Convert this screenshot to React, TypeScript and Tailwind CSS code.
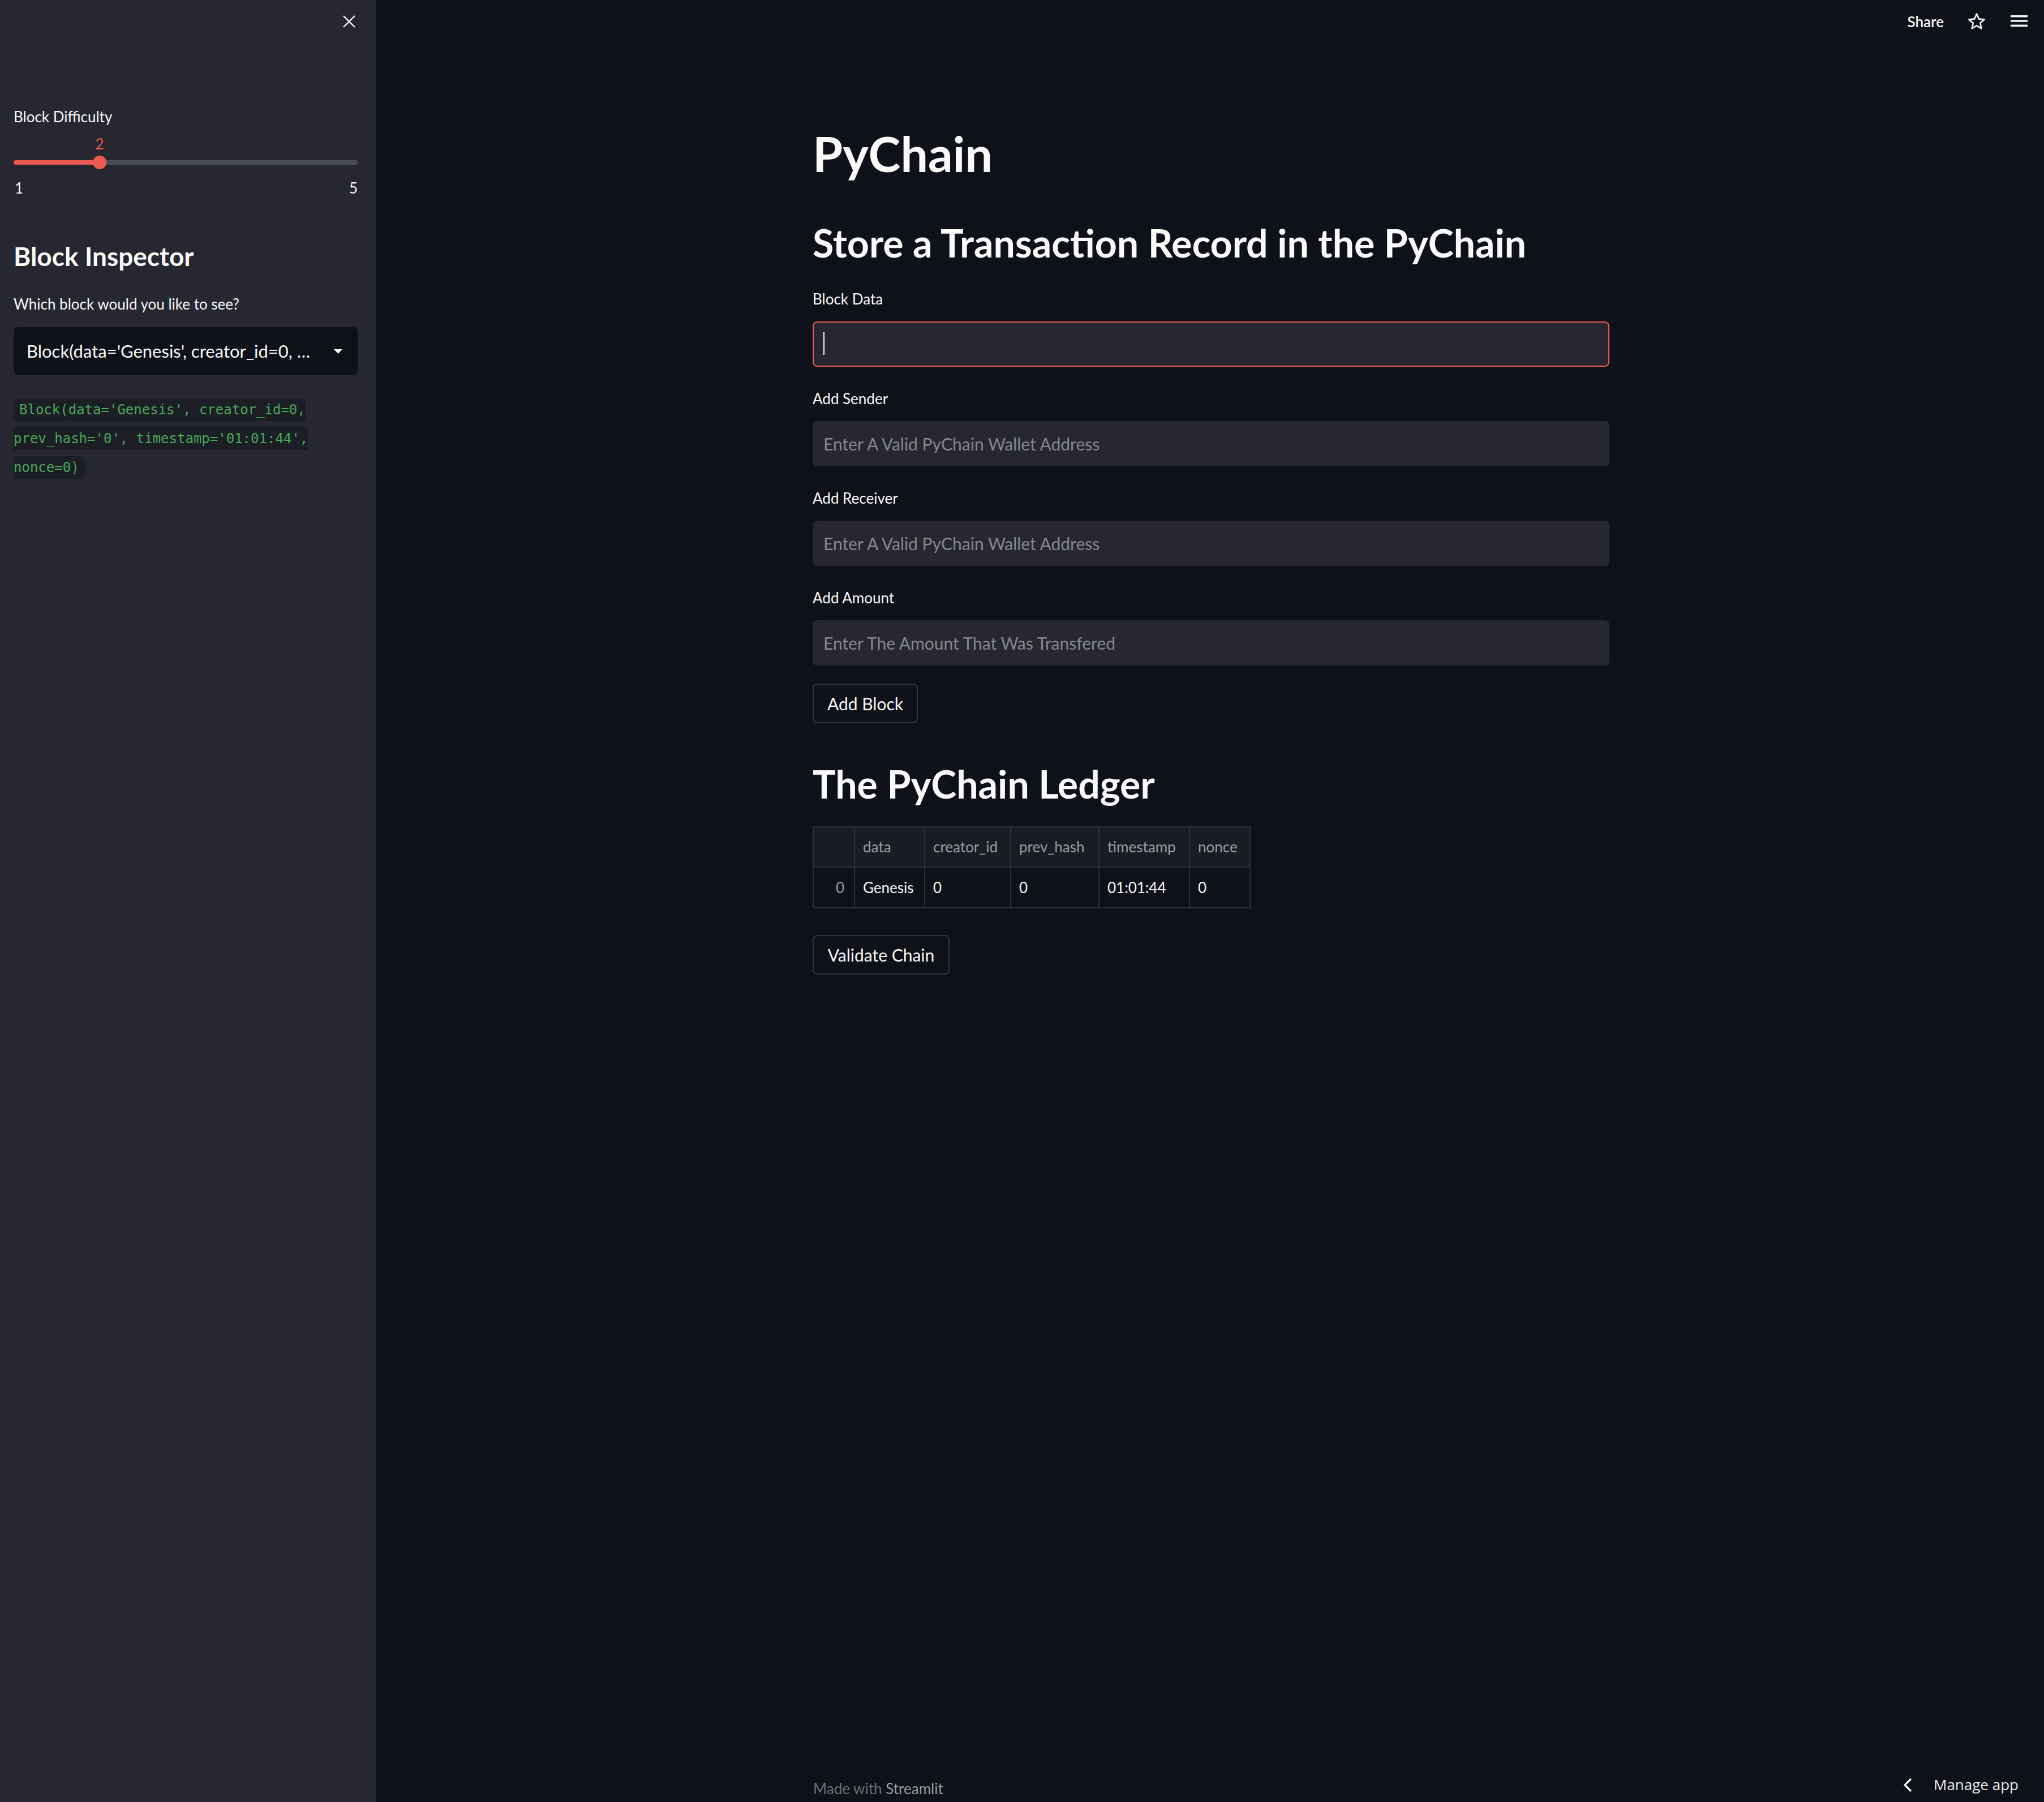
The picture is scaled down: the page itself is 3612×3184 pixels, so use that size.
import React from 'react';

const fields = [
  { label: 'Add Sender', placeholder: 'Enter A Valid PyChain Wallet Address' },
  { label: 'Add Receiver', placeholder: 'Enter A Valid PyChain Wallet Address' },
  { label: 'Add Amount', placeholder: 'Enter The Amount That Was Transfered' },
];

const columns = ['data', 'creator_id', 'prev_hash', 'timestamp', 'nonce'];
const row = ['Genesis', '0', '0', '01:01:44', '0'];

const Sidebar = () => (
  <aside className="relative w-[664px] shrink-0 bg-[#262730] pl-6 pr-8 pt-[188px] text-[#fafafa]">
    <button className="absolute right-[36px] top-[27px]">
      <svg width="22" height="22" viewBox="0 0 22 22" stroke="#fafafa" strokeWidth="2.4">
        <line x1="1" y1="1" x2="21" y2="21" />
        <line x1="21" y1="1" x2="1" y2="21" />
      </svg>
    </button>

    <label className="block text-[26px] leading-[36px]">Block Difficulty</label>

    {/* slider */}
    <div className="relative h-[90px]">
      <span className="absolute left-[152px] top-[12px] -translate-x-1/2 text-[26px] leading-[36px] text-[#ec5953]">2</span>
      <div className="absolute left-0 right-0 top-[59px] flex h-[8px] overflow-hidden rounded-full">
        <div className="w-[152px] bg-[#ec5953]" />
        <div className="flex-1 bg-[#4a4c56]" />
      </div>
      <div className="absolute left-[140px] top-[51px] h-[24px] w-[24px] rounded-full bg-[#ec5953]" />
    </div>
    <div className="flex justify-between text-[26px] leading-[36px]">
      <span className="pl-[2px]">1</span>
      <span>5</span>
    </div>

    <h2 className="mt-[75px] text-[46px] font-bold leading-[55px]">Block Inspector</h2>
    <p className="mt-[39px] text-[26px] leading-[36px]">Which block would you like to see?</p>

    <div className="mt-[23px] flex h-[85px] items-center justify-between rounded-[8px] bg-[#0e1117] pl-[23px] pr-[27px]">
      <span className="text-[31px] whitespace-nowrap">Block(data='Genesis', creator_id=0, …</span>
      <svg width="15" height="8" viewBox="0 0 15 8">
        <polygon points="0,0 15,0 7.5,8" fill="#fafafa" />
      </svg>
    </div>

    <p className="mt-[35px] text-[24px] leading-[50px]">
      <code className="rounded-[8px] bg-[#1c1e26] px-[10px] py-[6px] font-['DejaVu_Sans_Mono',monospace] text-[#4aa85a]">
        Block(data='Genesis', creator_id=0, prev_hash='0', timestamp='01:01:44', nonce=0)
      </code>
    </p>
  </aside>
);

const Field = ({ label, placeholder, active }: { label: string; placeholder?: string; active?: boolean }) => (
  <div>
    <label className="block text-[26px] leading-[36px]">{label}</label>
    <div
      className={`relative mt-[22px] h-[80px] rounded-[8px] border-2 bg-[#262730] ${
        active ? 'border-[#ec5953]' : 'border-[#262730]'
      }`}
    >
      <input
        className="h-full w-full bg-transparent pl-[17px] text-[30px] text-[#fafafa] outline-none placeholder:text-[#86878e]"
        placeholder={placeholder}
      />
      {active && <span className="absolute left-[17px] top-[17px] h-[40px] w-[2px] bg-[#fafafa]" />}
    </div>
  </div>
);

const App = () => {
  return (
    <div className="flex h-[3184px] w-full bg-[#0e1117] font-['Lato',sans-serif] text-[#fafafa]">
      <Sidebar />

      <main className="relative flex flex-1 flex-col">
        <header className="flex h-[76px] items-center justify-end pr-[29px]">
          <span className="text-[26px] font-semibold">Share</span>
          <svg className="ml-[42px]" width="32" height="32" viewBox="0 0 32 32" fill="none" stroke="#fafafa" strokeWidth="2.6" strokeLinejoin="round">
            <polygon points="16,2.5 19.9,11.6 29.6,12.4 22.2,18.8 24.4,28.4 16,23.3 7.6,28.4 9.8,18.8 2.4,12.4 12.1,11.6" />
          </svg>
          <svg className="ml-[44px]" width="30" height="22" viewBox="0 0 30 22" fill="#fafafa">
            <rect x="0" y="0" width="30" height="3.4" />
            <rect x="0" y="8.3" width="30" height="3.4" />
            <rect x="0" y="16.6" width="30" height="3.4" />
          </svg>
        </header>

        <div className="ml-[772px] w-[1408px] flex-1 pt-[143px]">
          <h1 className="text-[86px] font-bold leading-[103px]">PyChain</h1>
          <h2 className="mt-[66px] text-[68px] font-bold leading-[82px]">Store a Transaction Record in the PyChain</h2>

          <div className="mt-[40px] flex flex-col gap-[38px]">
            <Field label="Block Data" active />
            {fields.map((f) => (
              <Field key={f.label} label={f.label} placeholder={f.placeholder} />
            ))}
          </div>

          <button className="mt-[32px] h-[70px] w-[186px] rounded-[8px] border-2 border-[#33353d] bg-[#0e1117] text-[30px]">
            Add Block
          </button>

          <h2 className="mt-[66px] text-[68px] font-bold leading-[82px]">The PyChain Ledger</h2>

          <table className="mt-[34px] w-[772px] table-fixed border-collapse text-[26px]">
            <colgroup>
              <col className="w-[73px]" />
              <col className="w-[124px]" />
              <col className="w-[152px]" />
              <col className="w-[156px]" />
              <col className="w-[160px]" />
              <col className="w-[107px]" />
            </colgroup>
            <thead>
              <tr className="h-[71px] bg-[#1a1c23] text-[#9b9ea6]">
                <th className="border-2 border-[#2e3038]" />
                {columns.map((c) => (
                  <th key={c} className="border-2 border-[#2e3038] pl-[14px] text-left font-normal">
                    {c}
                  </th>
                ))}
              </tr>
            </thead>
            <tbody>
              <tr className="h-[72px]">
                <td className="border-2 border-[#2e3038] pr-[17px] text-right text-[#9b9ea6]">0</td>
                {row.map((v, i) => (
                  <td key={i} className="border-2 border-[#2e3038] pl-[14px]">
                    {v}
                  </td>
                ))}
              </tr>
            </tbody>
          </table>

          <button className="mt-[47px] h-[70px] w-[242px] rounded-[8px] border-2 border-[#33353d] bg-[#0e1117] text-[30px]">
            Validate Chain
          </button>
        </div>

        <footer className="ml-[773px] pb-[6px] text-[26px] leading-[36px] text-[#6c6e76]">
          Made with <span className="text-[#9a9ca4]">Streamlit</span>
        </footer>

        <div className="absolute bottom-[11px] right-[45px] flex items-center font-['Open_Sans',sans-serif] text-[26px] text-[#ececec]">
          <svg width="16" height="24" viewBox="0 0 16 24" fill="none" stroke="#fafafa" strokeWidth="3.2" strokeLinecap="round" strokeLinejoin="round">
            <polyline points="13,2 3,12 13,22" />
          </svg>
          <span className="ml-[38px]">Manage app</span>
        </div>
      </main>
    </div>
  );
};

export default App;
